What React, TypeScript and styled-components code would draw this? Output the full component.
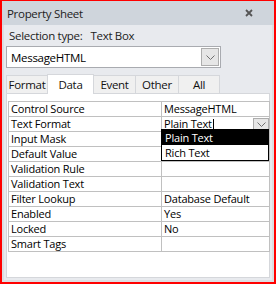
import React from "react";
import styled, { createGlobalStyle } from "styled-components";

const Global = createGlobalStyle`
  html, body { margin: 0; padding: 0; background: #ffffff; }
  * { box-sizing: border-box; }
`;

const Frame = styled.div`
  width: 276px;
  height: 284px;
  border-style: solid;
  border-color: #ff0000;
  border-width: 1px 2px 2px 2px;
  display: flex;
  flex-direction: column;
  font-family: "Open Sans", "Noto Sans", sans-serif;
  color: #000;
  background: #e8eaee;
  overflow: hidden;
`;

const TitleBar = styled.div`
  height: 24px;
  flex: none;
  background: #cfd5dc;
  display: flex;
  align-items: center;
  justify-content: space-between;
  padding: 0 21px 0 5px;
  font-size: 11.5px;
  letter-spacing: -0.3px;
  color: #222;
`;

const CloseIcon = () => (
  <svg width="8" height="8" viewBox="0 0 8 8">
    <path d="M1 1 L7 7 M7 1 L1 7" stroke="#555" strokeWidth="1.8" />
  </svg>
);

const Body = styled.div`
  flex: 1;
  display: flex;
  flex-direction: column;
  padding: 0 2px 2px 2px;
  border-left: 2px solid #dcdee2;
  border-right: 2px solid #dcdee2;
  border-bottom: 2px solid #dcdee2;
`;

const SelectionRow = styled.div`
  height: 20px;
  display: flex;
  align-items: center;
  padding-left: 3px;
  font-size: 11.5px;
  letter-spacing: -0.3px;
  color: #222;
  gap: 8px;
`;

const Combo = styled.div`
  margin-top: 1px;
  width: 215px;
  height: 22px;
  border: 1px solid #a9abb0;
  background: #fff;
  display: flex;
  align-items: center;
  padding: 0 1px 0 4px;
  font-size: 11.5px;
  letter-spacing: -0.3px;
`;

const ComboText = styled.span`
  flex: 1;
`;

const DropButton = styled.div<{ $w: number; $h: number }>`
  width: ${(p) => p.$w}px;
  height: ${(p) => p.$h}px;
  border: 1px solid #adadad;
  background: #e6e6e6;
  display: flex;
  align-items: center;
  justify-content: center;
`;

const Chevron = () => (
  <svg width="9" height="5" viewBox="0 0 9 5">
    <path d="M0.5 0.5 L4.5 4.5 L8.5 0.5" stroke="#707070" strokeWidth="1" fill="none" />
  </svg>
);

const Tabs = styled.div`
  margin-top: 5px;
  height: 20px;
  display: flex;
  align-items: flex-end;
`;

const Tab = styled.div<{ $w: number; $active?: boolean }>`
  width: ${(p) => p.$w}px;
  height: ${(p) => (p.$active ? 20 : 18)}px;
  border: 1px solid #d5d7db;
  border-bottom: none;
  margin-right: -1px;
  background: ${(p) => (p.$active ? "#ffffff" : "#f0f0f0")};
  display: flex;
  align-items: center;
  justify-content: center;
  font-size: 11.5px;
  letter-spacing: -0.3px;
  color: #111;
  position: relative;
  z-index: ${(p) => (p.$active ? 1 : 0)};
  margin-bottom: ${(p) => (p.$active ? -1 : 0)}px;
`;

const Panel = styled.div`
  flex: 1;
  background: #ffffff;
  border: 1px solid #d5d7db;
  padding: 7px 1px 0 1px;
`;

const Grid = styled.div`
  width: 262px;
  display: grid;
  grid-template-columns: 153px 1fr;
  border-top: 1px solid #c0c0c0;
  border-left: 1px solid #c0c0c0;
  position: relative;
`;

const Cell = styled.div`
  height: 15px;
  border-right: 1px solid #c0c0c0;
  border-bottom: 1px solid #c0c0c0;
  font-size: 11px;
  letter-spacing: -0.2px;
  line-height: 14px;
  padding-left: 2px;
  white-space: nowrap;
  display: flex;
  align-items: center;
  justify-content: space-between;
  position: relative;
`;

const Caret = styled.span`
  display: inline-block;
  width: 1px;
  height: 12px;
  background: #000;
  margin-left: 1px;
  vertical-align: middle;
`;

const List = styled.div`
  position: absolute;
  left: 152px;
  top: 27px;
  width: 108px;
  border: 1px solid #000;
  background: #fff;
  z-index: 2;
`;

const ListItem = styled.div<{ $selected?: boolean }>`
  height: 15px;
  font-size: 11px;
  letter-spacing: -0.2px;
  line-height: 15px;
  padding-left: 3px;
  background: ${(p) => (p.$selected ? "#000" : "#fff")};
  color: ${(p) => (p.$selected ? "#fff" : "#000")};
`;

const rows: [string, string][] = [
  ["Control Source", "MessageHTML"],
  ["Text Format", "Plain Text"],
  ["Input Mask", ""],
  ["Default Value", ""],
  ["Validation Rule", ""],
  ["Validation Text", ""],
  ["Filter Lookup", "Database Default"],
  ["Enabled", "Yes"],
  ["Locked", "No"],
  ["Smart Tags", ""],
];

export default function App() {
  return (
    <>
      <Global />
      <Frame>
        <TitleBar>
          <span>Property Sheet</span>
          <CloseIcon />
        </TitleBar>
        <Body>
          <SelectionRow>
            <span>Selection type:</span>
            <span>Text Box</span>
          </SelectionRow>
          <Combo>
            <ComboText>MessageHTML</ComboText>
            <DropButton $w={18} $h={18}>
              <Chevron />
            </DropButton>
          </Combo>
          <Tabs>
            <Tab $w={42}>Format</Tab>
            <Tab $w={47} $active>Data</Tab>
            <Tab $w={43}>Event</Tab>
            <Tab $w={44}>Other</Tab>
            <Tab $w={42}>All</Tab>
          </Tabs>
          <Panel>
            <Grid>
              {rows.map(([k, v]) => (
                <React.Fragment key={k}>
                  <Cell>{k}</Cell>
                  <Cell>
                    {k === "Text Format" ? (
                      <>
                        <span>
                          {v}
                          <Caret />
                        </span>
                        <DropButton $w={16} $h={13}>
                          <Chevron />
                        </DropButton>
                      </>
                    ) : (
                      v
                    )}
                  </Cell>
                </React.Fragment>
              ))}
              <List>
                <ListItem $selected>Plain Text</ListItem>
                <ListItem>Rich Text</ListItem>
              </List>
            </Grid>
          </Panel>
        </Body>
      </Frame>
    </>
  );
}
